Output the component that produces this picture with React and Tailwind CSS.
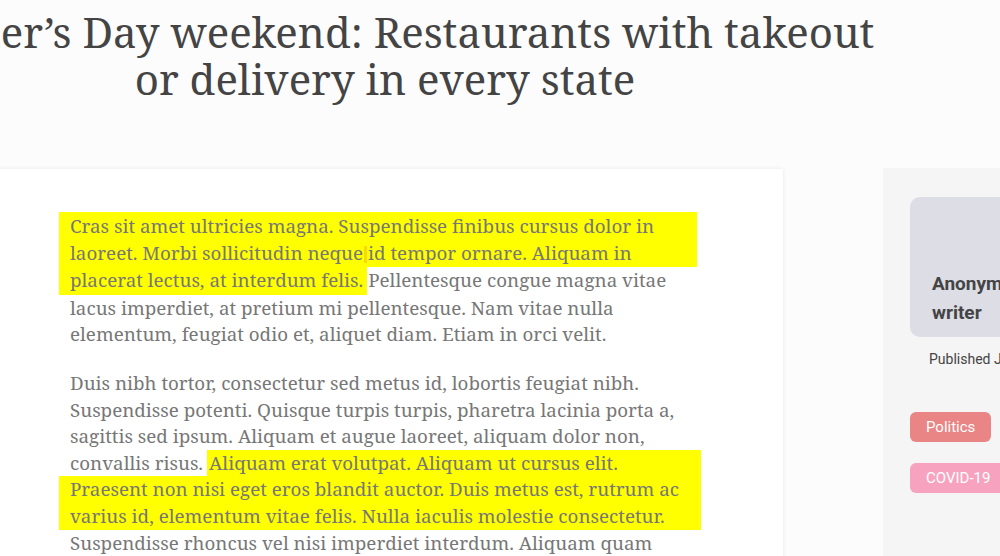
export default function App() {
  const serif = { fontFamily: '"Noto Serif", "DejaVu Serif", serif' };
  return (
    <div className="w-[1000px] h-[556px] overflow-hidden bg-[#fcfcfc] flex flex-col">
      {/* Title */}
      <div className="h-[169px] shrink-0 flex justify-center w-[1000px] -ml-[115px]">
        <h1
          className="w-[1200px] shrink-0 text-center text-[#444444] text-[42px] leading-[47px] pt-[8px] whitespace-nowrap"
          style={serif}
        >
          Mother’s Day weekend: Restaurants with takeout
          <br />
          or delivery in every state
        </h1>
      </div>

      <div className="flex items-start gap-[100px]">
        {/* Article card */}
        <div className="-ml-[20px] w-[803px] shrink-0 h-[420px] bg-white shadow-[0_0_5px_rgba(0,0,0,0.08)] pl-[79px] pt-[43px] text-[#777777] text-[18.8px] leading-[26.5px]" style={serif}>
          {/* Paragraph 1 */}
          <div className="w-[638px] whitespace-nowrap">
            <div className="bg-[#ffff00] pl-[11px] pt-[1px]">Cras sit amet ultricies magna. Suspendisse finibus cursus dolor in</div>
            <div className="bg-[#ffff00] pl-[11px] pb-[1px]">
              laoreet. Morbi sollicitudin neque
              <span className="inline-block w-[3px] h-[17px] bg-[#f8d900] align-[-3px] mx-[1px]"></span>
              id tempor ornare. Aliquam in
            </div>
            <div className="flex">
              <span className="bg-[#ffff00] pl-[11px] pr-[4px] pb-[1px]">placerat lectus, at interdum felis.</span>
              <span className="pl-[1px]">Pellentesque congue magna vitae</span>
            </div>
            <div className="pl-[11px]">lacus imperdiet, at pretium mi pellentesque. Nam vitae nulla</div>
            <div className="pl-[11px]">elementum, feugiat odio et, aliquet diam. Etiam in orci velit.</div>
          </div>

          {/* Paragraph 2 */}
          <div className="w-[642px] whitespace-nowrap mt-[22.5px]">
            <div className="pl-[11px]">Duis nibh tortor, consectetur sed metus id, lobortis feugiat nibh.</div>
            <div className="pl-[11px]">Suspendisse potenti. Quisque turpis turpis, pharetra lacinia porta a,</div>
            <div className="pl-[11px]">sagittis sed ipsum. Aliquam et augue laoreet, aliquam dolor non,</div>
            <div className="flex">
              <span className="pl-[11px] pr-[4px]">convallis risus.</span>
              <span className="flex-1 bg-[#ffff00] pl-[2px]">Aliquam erat volutpat. Aliquam ut cursus elit.</span>
            </div>
            <div className="bg-[#ffff00] pl-[11px]">Praesent non nisi eget eros blandit auctor. Duis metus est, rutrum ac</div>
            <div className="bg-[#ffff00] pl-[11px] pb-[1px]">varius id, elementum vitae felis. Nulla iaculis molestie consectetur.</div>
            <div className="pl-[11px]">Suspendisse rhoncus vel nisi imperdiet interdum. Aliquam quam</div>
          </div>
        </div>

        {/* Sidebar */}
        <div
          className="w-[300px] shrink-0 h-[400px] -mt-[1px] bg-[#f5f5f5] pl-[27px] pt-[29px]"
          style={{ fontFamily: 'Roboto, "Open Sans", sans-serif' }}
        >
          <div className="w-[260px] h-[140px] rounded-[10px] bg-[#dcdde5] px-[22px] pt-[72px]">
            <div className="text-[19px] leading-[29px] font-bold text-[#444444] w-[80px]">Anonymous writer</div>
          </div>
          <div className="mt-[12px] ml-[19px] text-[14px] text-[#444444]">Published June 2021</div>
          <div className="mt-[42px] flex flex-col gap-[21px] items-start">
            <span className="h-[30px] rounded-[6px] bg-[#ea8585] text-white text-[15px] leading-[30px] px-[16px]">Politics</span>
            <span className="h-[30px] rounded-[6px] bg-[#f7a3bf] text-white text-[15px] leading-[30px] px-[16px]">COVID-19</span>
          </div>
        </div>
      </div>
    </div>
  );
}
